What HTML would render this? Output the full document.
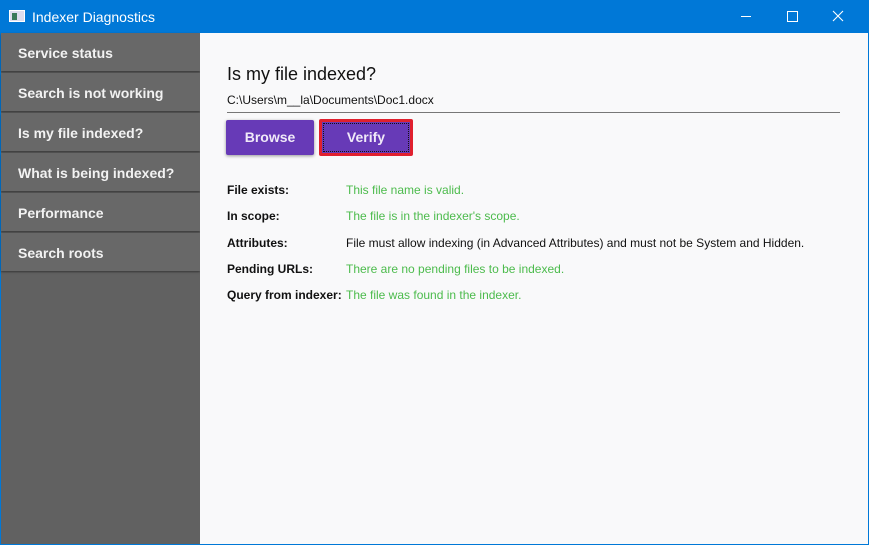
<!DOCTYPE html>
<html><head><meta charset="utf-8"><style>
*{margin:0;padding:0;box-sizing:border-box}
body{width:869px;height:545px;overflow:hidden;background:#0078d7;font-family:"Liberation Sans",sans-serif;position:relative}
.title{position:absolute;left:0;top:0;width:869px;height:33px;background:#0078d7;color:#fff;font-size:14px}
.title .t{position:absolute;left:32px;top:9px}
.icon{position:absolute;left:9px;top:10px;width:16px;height:12px;background:#dde;border:1px solid #fff}
.icon:after{content:"";position:absolute;left:2px;top:2px;width:5px;height:7px;background:#3a7a5a}
.ctl{position:absolute;top:0;width:46px;height:33px;color:#fff;text-align:center}
.side{position:absolute;left:1px;top:33px;width:199px;height:511px;background:#616161}
.item{height:38px;margin-bottom:2px;background:#686868;box-shadow:0 1px 2px rgba(0,0,0,.45);color:#f2f2f2;font-weight:bold;font-size:14px;padding:12px 0 0 17px}
.main{position:absolute;left:200px;top:33px;width:668px;height:511px;background:#f9f9fa}
h1{position:absolute;left:27px;top:31px;font-weight:normal;font-size:18px;color:#111}
.path{position:absolute;left:27px;top:60px;width:613px;font-size:12px;color:#111;border-bottom:1px solid #777;padding-bottom:5px}
.btn{position:absolute;top:87px;height:35px;background:#673ab7;color:#f0eaf8;font-weight:bold;font-size:14px;text-align:center;line-height:35px;border-radius:2px;box-shadow:0 1px 3px rgba(0,0,0,.4)}
.rows{position:absolute;left:27px;top:150px;font-size:12px}
.row{height:26.3px;position:relative}
.row b{position:absolute;left:0;color:#111;white-space:nowrap}
.row span{position:absolute;left:119px;white-space:nowrap}
.g{color:#4cbb4c}.k{color:#111}
</style></head><body>
<div class="title"><div class="icon"></div><span class="t">Indexer Diagnostics</span>
<svg class="ctl" style="left:723px" viewBox="0 0 46 33"><line x1="18" y1="16.5" x2="28" y2="16.5" stroke="#fff"/></svg>
<svg class="ctl" style="left:769px" viewBox="0 0 46 33"><rect x="18.5" y="11.5" width="10" height="10" fill="none" stroke="#fff"/></svg>
<svg class="ctl" style="left:815px" viewBox="0 0 46 33"><path d="M18 11L28 21M28 11L18 21" stroke="#fff" stroke-width="1.1"/></svg>
</div>
<div class="side">
<div class="item">Service status</div>
<div class="item">Search is not working</div>
<div class="item">Is my file indexed?</div>
<div class="item">What is being indexed?</div>
<div class="item">Performance</div>
<div class="item">Search roots</div>
</div>
<div class="main">
<h1>Is my file indexed?</h1>
<div class="path">C:\Users\m__la\Documents\Doc1.docx</div>
<div class="btn" style="left:26px;width:88px">Browse</div>
<div class="btn" style="left:119px;width:94px;top:86px;height:37px;border:3px solid #e0202e;line-height:31px;box-shadow:none"><div style="position:absolute;inset:1px;border:1px dotted #111"></div>Verify</div>
<div class="rows">
<div class="row"><b>File exists:</b><span class="g">This file name is valid.</span></div>
<div class="row"><b>In scope:</b><span class="g">The file is in the indexer's scope.</span></div>
<div class="row"><b>Attributes:</b><span class="k">File must allow indexing (in Advanced Attributes) and must not be System and Hidden.</span></div>
<div class="row"><b>Pending URLs:</b><span class="g">There are no pending files to be indexed.</span></div>
<div class="row"><b>Query from indexer:</b><span class="g">The file was found in the indexer.</span></div>
</div>
</div>
</body></html>
